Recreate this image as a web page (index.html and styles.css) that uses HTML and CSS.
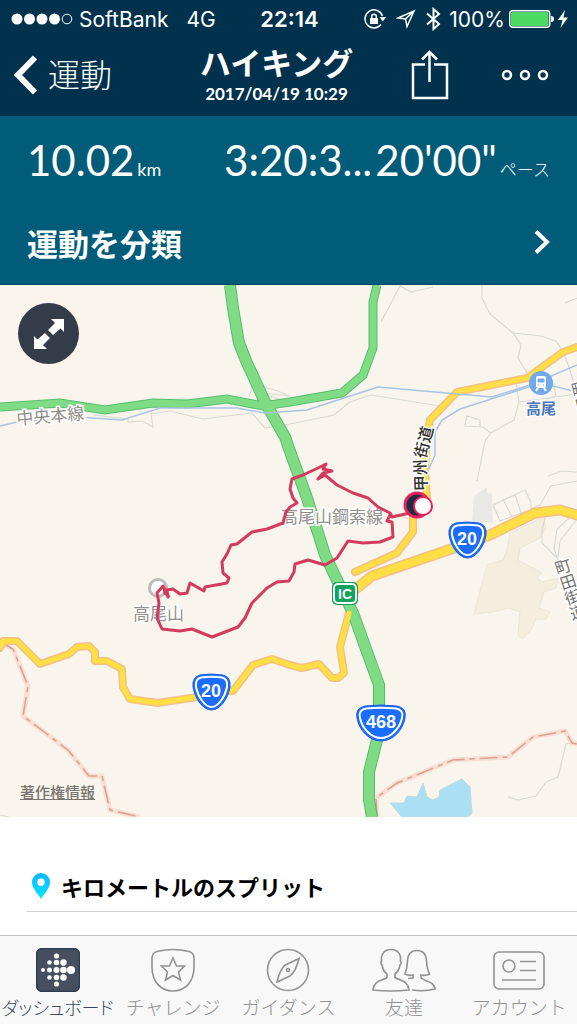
FILE: index.html
```html
<!DOCTYPE html>
<html lang="ja">

<head>
    <meta charset="UTF-8">
    <meta name="viewport" content="width=device-width, initial-scale=1">
    <title>ハイキング</title>
    <link rel="stylesheet" href="styles.css">
</head>

<body>
    <header>
        <div class="status">
            <div class="status-left">
                <svg class="signal" width="62" height="12" viewBox="0 0 62 12">
                    <circle cx="6" cy="6" r="5.5" />
                    <circle cx="18.5" cy="6" r="5.5" />
                    <circle cx="31" cy="6" r="5.5" />
                    <circle cx="43.500" cy="6" r="5.5" />
                    <circle class="signal-off" cx="56" cy="6" r="4.8" />
                </svg>
                <span>SoftBank</span>
                <span class="network">4G</span>
            </div>
            <div class="clock">22:14</div>
            <div class="status-right">
                <div class="status-icons">
                    <svg width="22" height="20" viewBox="0 0 22 20">
                        <path class="line" d="M18.500 7A9 9 0 1 0 17 15.500" />
                        <path class="solid" d="M15.500 8h6.500l-3.200 4.500z" />
                        <rect class="solid" x="6" y="9" width="8" height="6" />
                        <path class="line" d="M7.700 9V7.500a2.300 2.300 0 0 1 4.600 0V9" />
                    </svg>
                    <svg width="20" height="20" viewBox="0 0 20 20">
                        <path class="line" d="M18 2L11 17.500L9.500 10L2 9z M9.500 10L18 2" />
                    </svg>
                    <svg width="15" height="24" viewBox="0 0 15 24">
                        <path class="line line-bold" d="M1 6.500L13 17L7.500 22V2L13 7L1 17.500" />
                    </svg>
                </div>
                <span>100%</span>
                <svg width="45" height="18" viewBox="0 0 45 18">
                    <rect class="line" x="0.7" y="0.7" width="40" height="16.600" rx="3" />
                    <rect class="charge" x="2" y="2" width="37.500" height="14" rx="1.500" />
                    <path class="solid" d="M42 6q3 0 3 3t-3 3z" />
                </svg>
                <svg width="10" height="18" viewBox="0 0 10 18">
                    <path class="solid" d="M7 0L0 10h4.500L2.500 18L10 7.500H5.500z" />
                </svg>
            </div>
        </div>

        <nav class="navbar">
            <a class="back" href="#">
                <svg width="24" height="40" viewBox="0 0 24 40">
                    <path d="M21 2.500L4 20L21 37.500" />
                </svg>
                運動
            </a>
            <div class="heading">
                <h1>ハイキング</h1>
                <div class="date">2017/04/19 10:29</div>
            </div>
            <div class="actions">
                <button type="button" aria-label="共有">
                    <svg width="38" height="50" viewBox="0 0 38 50">
                        <path d="M14 14.500H2V48H36V14.500H23M18.500 32V3M11 9.500L18.500 2L26 9.500" />
                    </svg>
                </button>
                <button type="button" aria-label="メニュー">
                    <svg width="48" height="12" viewBox="0 0 48 12">
                        <circle cx="6" cy="6" r="4" />
                        <circle cx="24" cy="6" r="4" />
                        <circle cx="42" cy="6" r="4" />
                    </svg>
                </button>
            </div>
        </nav>
    </header>

    <section class="summary">
        <div class="stats">
            <div class="stat">
                <span class="value">10.02</span>
                <span class="unit">km</span>
            </div>
            <div class="stat">
                <span class="value">3:20:3...</span>
                <span class="value">20'00"</span>
                <span class="unit unit-pace">ペース</span>
            </div>
        </div>
        <a class="classify" href="#">
            運動を分類
            <svg width="16" height="24" viewBox="0 0 16 24">
                <path d="M2 1.500L13 12L2 22.500" />
            </svg>
        </a>
    </section>

    <section class="map">
        <svg class="map-canvas" viewBox="0 0 577 532">
            <!-- land -->
            <path class="land" d="M510 248L543 232L546 243L540 253L520 263L518 275L542 288L537 293L542 297L558 293L556 303L544 307L539 323L550 327L546 334H536L531 345L522 354L518 350L520 327L508 323L493 327L474 329L487 280L503 275L507 265z" />
            <path class="town" d="M474 211L487 202V208L492 209L493 238L472 237z" />
            <path class="lake" d="M390 518H404L407 511L417 512L423 498L427 512L433 515L439 512L440 505L462 494L470 502L472 528L468 532H402z" />

            <!-- small roads -->
            <g class="path">
                <path d="M381 37L400 1L411 7L433 2" />
                <path d="M482 0V13L490 29L513 48L521 60L518 73L527 88" />
                <path d="M513 48L541 51L556 56L563 67L569 82L577 108" />
                <path d="M565 18L577 13" />
                <path d="M290 139L334 130L350 117L371 110L440 121" />
                <path d="M516 97L519 117L514 135L491 148L485 156L477 196" />
                <path d="M491 148L483 142L465 141L467 131L480 135V141" />
                <path d="M519 117L577 109" />
                <path d="M553 98L556 111L546 114" />
                <path d="M93 130L128 134V137L142 136L153 142L151 129L170 126L203 134L252 128L265 143L290 139" />
                <path d="M249 112L253 100L275 105L290 111L262 108L290 118" />
                <path d="M493 220L525 205L531 217V224L540 220L551 201L577 196M493 220L500 236L535 223M503 214L512 232M515 209L521 228M548 191L562 186L577 187" />
                <path d="M547 226L542 245V258L556 272M577 226L557 244L554 264L560 280M577 234L560 256L558 272" />
                <path d="M508 512L518 515L536 511L546 497L558 492L566 459L577 457M390 228L413 235" />
                <path d="M0 530L9 532" />
            </g>

            <!-- boundary -->
            <g class="boundary">
                <path d="M0 357L13 364L28 401L23 431L68 465L89 491H102L110 525L140 532" />
                <path d="M377 532L376 513L397 498L453 475L508 472L533 452L565 446L572 458L577 459" />
            </g>
            <g class="boundary-dash">
                <path d="M0 357L13 364L28 401L23 431L68 465L89 491H102L110 525L140 532" />
                <path d="M377 532L376 513L397 498L453 475L508 472L533 452L565 446L572 458L577 459" />
            </g>

            <!-- national roads -->
            <g class="road-edge">
                <path d="M577 62L563 67L527 93L457 107L430 135L427 150L425 187L427 213L413 230V247L397 268L355 287" />
                <path class="wide" d="M577 230L560 225L535 228L490 250L457 262L372 291L357 303" />
                <path d="M349 328L340 362L344 388L338 393H332L319 379L302 383L290 380L272 374L253 380L233 406H228L197 412L158 418L130 414L123 402L122 384L107 376H95V367L89 361L77 362L69 369L40 379L17 356H3L0 363" />
            </g>
            <g class="road">
                <path d="M577 62L563 67L527 93L457 107L430 135L427 150L425 187L427 213L413 230V247L397 268L355 287" />
                <path class="wide" d="M577 230L560 225L535 228L490 250L457 262L372 291L357 303" />
            </g>

            <!-- expressways -->
            <g class="express-edge">
                <path d="M0 122L60 118L105 125L153 118L187 119L227 114L263 121L290 117L342 108L363 90L373 63V17L377 0" />
                <path class="wide" d="M230 0L233 23L239 58L247 78L265 117L285 152L292 172L307 213L325 270L353 328L379 400V428L377 455L369 487V515L372 532" />
            </g>
            <g class="express">
                <path d="M0 122L60 118L105 125L153 118L187 119L227 114L263 121L290 117L342 108L363 90L373 63V17L377 0" />
                <path class="wide" d="M230 0L233 23L239 58L247 78L265 117L285 152L292 172L307 213L325 270L353 328L379 400V428L377 455L369 487V515L372 532" />
            </g>
            <g class="road">
                <path d="M349 328L340 362L344 388L338 393H332L319 379L302 383L290 380L272 374L253 380L233 406H228L197 412L158 418L130 414L123 402L122 384L107 376H95V367L89 361L77 362L69 369L40 379L17 356H3L0 363" />
            </g>

            <!-- railways -->
            <g class="rail">
                <path d="M0 141L17 137L77 132L122 135L160 123H237L265 128L307 125L378 102L492 112L530 100L577 80" />
                <path d="M577 107L541 98L460 124L442 135L435 147V170L427 188" />
            </g>

            <!-- labels -->
            <g class="label">
                <text x="17" y="140" transform="rotate(-5 17 140)">中央本線</text>
                <text x="281" y="238">高尾山鋼索線</text>
                <circle class="peak-halo" cx="158" cy="303" r="10" />
                <circle class="peak" cx="158" cy="303" r="7" />
                <text x="133" y="335">高尾山</text>
            </g>
            <path id="koshu" class="guide" d="M427 206L426 172L435 136" />
            <text class="road-label"><textPath href="#koshu">甲州街道</textPath></text>
            <g class="road-label road-label-light">
                <text class="vertical" x="560" y="274" transform="rotate(-18 560 274)">町田街道</text>
                <text class="vertical" x="577" y="96" transform="rotate(-14 577 96)">町田</text>
            </g>
            <g class="station">
                <circle cx="541" cy="98" r="12" />
                <rect x="536" y="91" width="10" height="12" rx="2" />
                <path class="station-window" d="M538 94h6v3h-6zM538 100h1M543 100h1" />
                <path class="station-track" d="M538 103L536 106M544 103L546 106" />
                <text x="541" y="129">高尾</text>
            </g>

            <!-- recorded route -->
            <path class="route" d="M410 228L392 232L390 228L378 222L368 213L353 208L337 200L325 190L318 194L323 188L332 186L323 184L326 179L318 183L303 190L292 194L290 204L293 213L297 218L290 222L286 227L283 238L267 244L252 247L237 259L231 260L227 269L222 277L223 288L229 293L227 298L205 302L204 306L190 298L187 308L180 309L173 304L167 305L168 312L163 301L157 308L159 318L157 333L162 344L180 346L192 344L212 352L238 342L245 333L252 318L267 303L277 297L289 296L294 287L295 279L308 275L325 280L337 273L348 256L363 258L380 257L393 252L392 237L387 236L390 230" />
            <path class="route-tip" d="M163 301L170 312L164 309z" />

            <!-- road shields -->
            <g class="shield">
                <g transform="translate(448 237)">
                    <path class="shield-rim" d="M8 1Q19.500 -1 31 1Q39 3 38 13C36 25 28 36 19.500 36S3 25 1 13Q0 3 8 1z" />
                    <path class="shield-line" d="M9 3.500Q19.500 2 30 3.500Q36 5 35 13C33 23 26 33 19.500 33S6 23 4 13Q3 5 9 3.500z" />
                    <text x="19" y="23">20</text>
                </g>
                <g transform="translate(192 389)">
                    <path class="shield-rim" d="M8 1Q19.500 -1 31 1Q39 3 38 13C36 25 28 36 19.500 36S3 25 1 13Q0 3 8 1z" />
                    <path class="shield-line" d="M9 3.500Q19.500 2 30 3.500Q36 5 35 13C33 23 26 33 19.500 33S6 23 4 13Q3 5 9 3.500z" />
                    <text x="19" y="23">20</text>
                </g>
                <g transform="translate(356 420)">
                    <path class="shield-rim" d="M9 1Q25 -1 41 1Q51 3 49 13C47 25 37 36 25 36S3 25 1 13Q-1 3 9 1z" />
                    <path class="shield-line" d="M10 3.500Q25 2 40 3.500Q48 5 46 13C44 23 35 33 25 33S6 23 4 13Q2 5 10 3.500z" />
                    <text x="25" y="23">468</text>
                </g>
            </g>
            <g class="junction">
                <rect class="junction-rim" x="332" y="297" width="26" height="23" rx="5" />
                <rect class="junction-line" x="334" y="299" width="22" height="19" rx="4" />
                <text x="345" y="314">IC</text>
            </g>

            <!-- start and goal -->
            <circle class="pin-start" cx="417" cy="220" r="12" />
            <circle class="pin-goal" cx="423" cy="221" r="9" />
        </svg>

        <button class="expand" type="button" aria-label="地図を拡大">
            <svg width="32" height="32" viewBox="0 0 32 32">
                <path d="M18 1H31V14L27.500 10.500L20 17L15 12L22 5z" />
                <path d="M14 31H1V18L4.500 21.500L12 15L17 20L10 27z" />
            </svg>
        </button>
        <a class="copyright" href="#">著作権情報</a>
    </section>

    <section class="splits">
        <h2>
            <svg width="20" height="28" viewBox="0 0 20 28">
                <defs>
                    <linearGradient id="pin" x1="0" y1="0" x2="0" y2="1">
                        <stop offset="0" stop-color="#0fb4ff" />
                        <stop offset="1" stop-color="#00e8ff" />
                    </linearGradient>
                </defs>
                <path fill="url(#pin)" fill-rule="evenodd" d="M10 1a9 9 0 0 1 9 9.500C19 16 13 22 10 27C7 22 1 16 1 10.500A9 9 0 0 1 10 1zM10 6.500a3.700 3.700 0 1 0 0 7.400a3.700 3.700 0 1 0 0 -7.400z" />
            </svg>
            キロメートルのスプリット
        </h2>
    </section>

    <nav class="tabs">
        <a class="tab tab-active" href="#">
            <svg width="44" height="44" viewBox="0 0 44 44">
                <rect x="0.500" y="0.500" width="43" height="43" rx="6" />
                <g class="dots">
                    <circle cx="7" cy="22" r="2" />
                    <circle cx="13.500" cy="14.500" r="2.300" />
                    <circle cx="13.500" cy="22" r="2.500" />
                    <circle cx="13.500" cy="29.500" r="2.300" />
                    <circle cx="20.500" cy="8" r="2.600" />
                    <circle cx="20.500" cy="14.500" r="2.800" />
                    <circle cx="20.500" cy="22" r="3" />
                    <circle cx="20.500" cy="29.500" r="2.800" />
                    <circle cx="20.500" cy="36" r="2.600" />
                    <circle cx="27.500" cy="14.500" r="3.200" />
                    <circle cx="27.500" cy="22" r="3.300" />
                    <circle cx="27.500" cy="29.500" r="3.200" />
                    <circle cx="35" cy="22" r="4" />
                </g>
            </svg>
            <span>ダッシュボード</span>
        </a>
        <a class="tab" href="#">
            <svg width="44" height="44" viewBox="0 0 44 44">
                <path d="M6 3.500Q22 -0.500 38 3.500Q43 5 43 10V19C43 34 34 43 22 43S1 34 1 19V10Q1 5 6 3.500z" />
                <path d="M22 10L25.500 18H33.500L27.500 24L29.500 32L22 27.500L14.500 32L16.500 24L10.500 18H18.500z" />
            </svg>
            <span>チャレンジ</span>
        </a>
        <a class="tab" href="#">
            <svg width="44" height="44" viewBox="0 0 44 44">
                <circle cx="22" cy="22" r="20.500" />
                <path d="M33 10.500Q30 23 24 28L11 34Q13 24 18.500 17.500z" />
                <circle cx="22" cy="22" r="1.500" />
            </svg>
            <span>ガイダンス</span>
        </a>
        <a class="tab" href="#">
            <svg width="64" height="44" viewBox="0 0 64 44">
                <path d="M15 29.500V26Q11 23 10 17Q8 15 9.500 13V9Q11 1.500 19 1.500T28.500 9V13Q30 15 28 17Q27 23 23 26V29.500C28 33 36 32 37 42Q19 44 1 42C2 32 10 33 15 29.500z" />
                <path d="M40 42Q52 44 63 41C62 33 54 34 49 30V27Q54 28 57.500 26Q55 21 54.500 13Q54 2.500 45 2.500T35.500 13Q35 21 33 26Q37 28 41 27V30L36 30.500" />
            </svg>
            <span>友達</span>
        </a>
        <a class="tab" href="#">
            <svg width="52" height="44" viewBox="0 0 52 44">
                <rect x="1" y="4" width="50" height="37" rx="5" />
                <circle cx="16" cy="18" r="6" />
                <path d="M27 13.500H43M27 22.500H43M9 32H43" />
            </svg>
            <span>アカウント</span>
        </a>
    </nav>
</body>

</html>
```
FILE: styles.css
```css
* {
    box-sizing: border-box;
}

body {
    margin: 0;
    min-height: 100vh;
    display: flex;
    flex-direction: column;
    background: #ffffff;
    font-family: Lato, "Noto Sans CJK JP", sans-serif;
    color: #000000;
}

h1,
h2 {
    margin: 0;
}

a {
    color: inherit;
    text-decoration: none;
}

button {
    padding: 0;
    border: none;
    background: none;
    display: flex;
    align-items: center;
    justify-content: center;
}

svg {
    display: block;
    flex: none;
    fill: none;
}

header {
    background: #00324d;
    color: #ffffff;
    height: 116px;
}

.status {
    display: grid;
    grid-template-columns: 1fr auto 1fr;
    align-items: center;
    height: 38px;
    padding: 0 9px 0 11px;
    font-family: Inter, sans-serif;
    font-size: 21px;
}

.status-left,
.status-right {
    display: flex;
    align-items: center;
    gap: 6px;
}

.status-right {
    justify-content: flex-end;
    gap: 4px;
}

.status-icons {
    display: flex;
    align-items: center;
    gap: 10px;
    margin-right: 4px;
}

.network {
    margin-left: 12px;
}

.clock {
    font-weight: 600;
    font-size: 22px;
}

.signal {
    fill: #ffffff;
}

.signal-off {
    fill: none;
    stroke: #ffffff;
}

.line {
    stroke: #ffffff;
    stroke-width: 1.5;
}

.line-bold {
    stroke-width: 2;
}

.solid {
    fill: #ffffff;
}

.charge {
    fill: #4cd964;
}

.navbar {
    display: grid;
    grid-template-columns: 1fr auto 1fr;
    align-items: center;
    height: 74px;
    padding: 0 28px 0 14px;
}

.navbar svg {
    stroke: #ffffff;
    stroke-width: 2.5;
}

.back {
    display: flex;
    align-items: center;
    gap: 10px;
    font-size: 32px;
    font-weight: 300;
    line-height: 40px;
}

.back svg {
    stroke-width: 6;
}

.heading {
    padding-right: 10px;
    text-align: center;
}

h1 {
    font-size: 31px;
    line-height: 38px;
}

.date {
    font-size: 17px;
    font-weight: bold;
    line-height: 24px;
}

.actions {
    display: flex;
    align-items: center;
    justify-content: flex-end;
    gap: 52px;
}

.summary {
    background: #005c78;
    border-bottom: 1px solid #00486a;
    color: #ffffff;
    padding: 0 27px;
    height: 169px;
}

.stats {
    display: flex;
    justify-content: space-between;
    height: 88px;
    line-height: 88px;
    white-space: nowrap;
}

.stat {
    display: flex;
    align-items: baseline;
    gap: 3px;
}

.value {
    font-size: 42px;
}

.unit {
    font-size: 18px;
}

.unit-pace {
    font-size: 17px;
    font-weight: 300;
}

.classify {
    display: flex;
    align-items: center;
    justify-content: space-between;
    height: 76px;
    font-size: 31px;
    font-weight: bold;
}

.classify svg {
    stroke: #ffffff;
    stroke-width: 4;
}

.map {
    position: relative;
    background: #f9f5ed;
}

.map-canvas {
    width: 100%;
    height: auto;
}

.land {
    fill: #f5eddd;
    stroke: #eee5d5;
}

.town {
    fill: #e9e8e4;
}

.lake {
    fill: #abdff3;
    stroke: #bcdbe0;
}

.path {
    stroke: #d9dad3;
    stroke-width: 1.2;
}

.boundary {
    stroke: #f8ded5;
    stroke-width: 5;
}

.boundary-dash {
    stroke: #dda395;
    stroke-width: 1.6;
    stroke-dasharray: 18 5 5 5;
}

.road-edge {
    stroke: #f5bf88;
    stroke-width: 8;
    stroke-linecap: round;
    stroke-linejoin: round;
}

.road {
    stroke: #ffdf43;
    stroke-width: 5;
    stroke-linecap: round;
    stroke-linejoin: round;
}

.road-edge .wide {
    stroke-width: 11;
}

.road .wide {
    stroke-width: 8;
}

.express-edge {
    stroke: #55bd70;
    stroke-width: 9;
}

.express {
    stroke: #80dc84;
    stroke-width: 7;
}

.express-edge .wide {
    stroke-width: 12;
}

.express .wide {
    stroke-width: 10;
}

.rail {
    stroke: #a9c4e2;
    stroke-width: 1.5;
}

.label {
    font-size: 17px;
    fill: #918f8a;
    stroke: #ffffff;
    stroke-width: 3;
    paint-order: stroke;
}

.peak-halo {
    fill: #bdbbb5;
    stroke: none;
}

.peak {
    fill: #ffffff;
    stroke: #bdbbb5;
    stroke-width: 5;
}

.guide {
    stroke: none;
}

.road-label {
    font-size: 16px;
    font-weight: 500;
    fill: #30302e;
    stroke: #ffffff;
    stroke-width: 3;
    paint-order: stroke;
}

.road-label-light {
    font-weight: normal;
    fill: #70706c;
}

.vertical {
    writing-mode: vertical-rl;
}

.station {
    fill: #ffffff;
    font-size: 15px;
    font-weight: bold;
    text-anchor: middle;
}

.station circle {
    fill: #73a8eb;
}

.station text {
    fill: #4a76b5;
    stroke: #ffffff;
    stroke-width: 2;
    paint-order: stroke;
}

.station-window {
    fill: #73a8eb;
    stroke: #73a8eb;
}

.station-track {
    stroke: #ffffff;
    stroke-width: 2;
}

.route {
    stroke: #d33a5e;
    stroke-width: 3;
    stroke-linejoin: round;
}

.route-tip {
    fill: #d33a5e;
    stroke: #d33a5e;
}

.shield,
.junction {
    font-family: "Liberation Sans", sans-serif;
    font-size: 18px;
    font-weight: bold;
    text-anchor: middle;
    fill: #ffffff;
}

.shield-rim {
    fill: #1a6dff;
    stroke: #1a5de8;
}

.shield-line {
    fill: #1a6dff;
    stroke: #ffffff;
    stroke-width: 2;
}

.junction {
    font-size: 14px;
}

.junction-rim {
    fill: #0d9b58;
}

.junction-line {
    fill: #0fa35f;
    stroke: #ffffff;
    stroke-width: 2;
}

.pin-start {
    fill: #1d2c42;
    stroke: #ec1e5b;
    stroke-width: 3;
}

.pin-goal {
    fill: #ffffff;
    stroke: #ec1e5b;
    stroke-width: 2;
}

.expand {
    position: absolute;
    top: 18px;
    left: 18px;
    width: 61px;
    height: 61px;
    border-radius: 50%;
    background: #343c4a;
}

.expand svg {
    fill: #ffffff;
}

.copyright {
    position: absolute;
    left: 20px;
    bottom: 14px;
    font-size: 15px;
    font-weight: 500;
    line-height: 22px;
    color: #77746f;
    text-decoration: underline;
}

.splits {
    flex: 1;
    padding: 44px 0 23px 27px;
}

h2 {
    display: flex;
    align-items: center;
    gap: 10px;
    height: 51px;
    padding-left: 4px;
    border-bottom: 1px solid #d2d2d2;
    font-size: 22px;
    font-weight: bold;
}

.tabs {
    display: grid;
    grid-template-columns: repeat(5, minmax(0, 1fr));
    height: 89px;
    border-top: 1px solid #c0c0c0;
    background: #f8f8f8;
}

.tab {
    display: flex;
    flex-direction: column;
    align-items: center;
    padding-top: 12px;
    color: #929292;
    font-size: 19px;
    font-weight: 300;
    line-height: 32px;
    white-space: nowrap;
}

.tab svg {
    stroke: #929292;
    stroke-width: 1.6;
}

.tab-active {
    color: #3a475c;
    font-size: 18px;
    font-feature-settings: "palt";
}

.tab-active rect {
    fill: #454f60;
    stroke: #2c3a52;
}

.dots {
    fill: #ffffff;
    stroke: none;
}
```
